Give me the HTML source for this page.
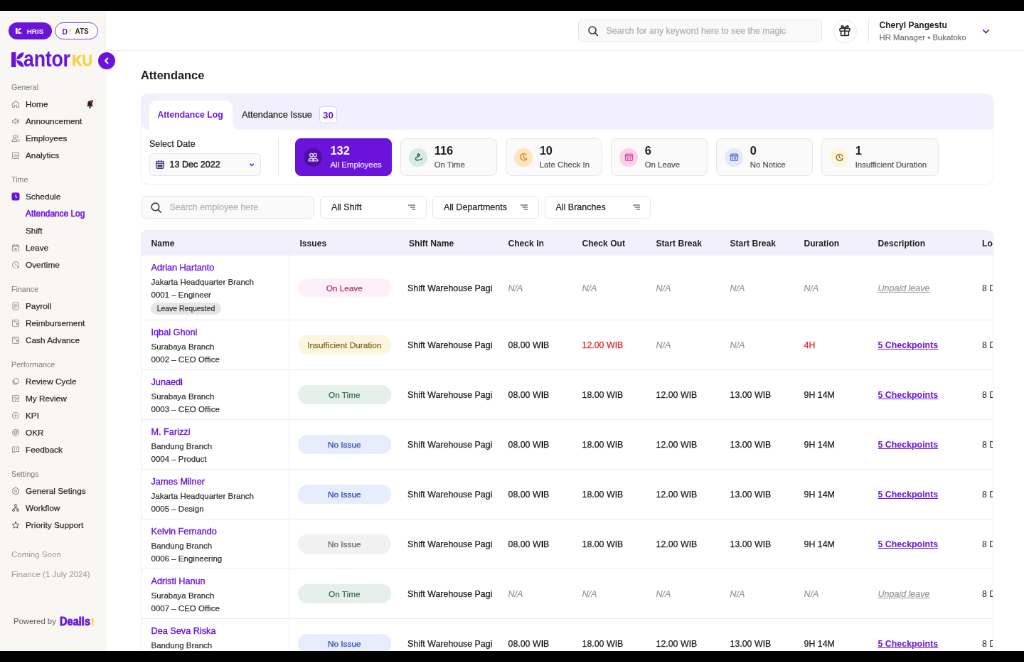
<!DOCTYPE html>
<html><head><meta charset="utf-8">
<style>
*{box-sizing:border-box;margin:0;padding:0}
html,body{width:1024px;height:662px;overflow:hidden;background:#000}
body{font-family:"Liberation Sans",sans-serif;position:relative}
#app{will-change:transform;-webkit-font-smoothing:antialiased;-webkit-text-stroke-width:0.25px;position:absolute;left:0;top:11px;width:1440px;height:900px;transform:scale(0.711111);transform-origin:0 0;background:#fff;overflow:hidden;color:#1f1f1f}
.abs{position:absolute}
[style*="font-weight:bold"],.hd,.cp,.lg{-webkit-text-stroke-width:0}
#side{position:absolute;left:0;top:0;width:150px;height:900px;background:#f8f7f4}
#hdr{position:absolute;left:150px;top:0;width:1290px;height:55.5px;background:#fff;box-shadow:0 3px 8px rgba(0,0,0,.02);border-bottom:1px solid #f0f0f0;z-index:2}
.nav{position:absolute;left:0;width:150px;height:24px;font-size:11.8px;line-height:24px;color:#2a2a2a}
.nav .t{position:absolute;left:36px;top:0}
.nav .ic{position:absolute;left:16px;top:6px;width:12px;height:12px}
.sec{position:absolute;left:16px;font-size:10.7px;line-height:24px;color:#858585;-webkit-text-stroke-width:0.1px}
.tx{white-space:nowrap;line-height:16px}
.hd{font-size:12.1px;font-weight:bold;color:#1f1f1f}
.nm{font-size:12.7px;color:#6a14d9;-webkit-text-stroke:0.35px #6a14d9}
.sb{font-size:11.5px;color:#333}
.rg{font-size:12.4px;color:#222}
.na{font-size:12.5px;font-style:italic;color:#9b9b9b}
.cp{font-size:12.4px;font-weight:bold;color:#6a14d9;text-decoration:underline}
.lg{font-size:12.4px;color:#222}
.pill{width:131.5px;height:26.4px;border-radius:13.2px;font-size:11.8px;line-height:28.4px;text-align:center}
</style></head>
<body>
<div id="app">
  <div id="side">

    <div class="abs" style="left:12px;top:16px;width:61px;height:24px;border-radius:12px;background:#6a14d9"></div>
    <div class="abs" style="left:22px;top:23.5px;width:9px;height:8px"><svg viewBox="0 0 9 8" width="9" height="8" style="display:block"><rect x="0" y="0" width="2.6" height="8" fill="#fff"/><path d="M3 3.8 Q3.8 0.3 7.6 0 Q7.3 3.5 3 3.8Z" fill="#fff"/><path d="M3 4.2 Q6.6 4.5 7 8 L3.8 8 Q3.2 6 3 4.2Z" fill="#fff"/><rect x="6.4" y="6" width="2.2" height="2" fill="#f5c21b"/></svg></div>
    <div class="abs" style="left:37.8px;top:16.5px;line-height:24px;font-size:9.8px;font-weight:bold;color:#fff">HRIS</div>
    <div class="abs" style="left:77px;top:16px;width:61px;height:24px;border-radius:12px;border:1.4px solid #7d3fe0;background:#fff"></div>
    <div class="abs" style="left:87.5px;top:16.5px;line-height:24px;font-size:10.6px;font-weight:bold;color:#6a14d9">D<span style="color:#f5c21b;margin-left:1.5px">!</span></div>
    <div class="abs" style="left:105.5px;top:16.5px;line-height:24px;font-size:10px;font-weight:bold;color:#333">ATS</div>
    <div class="abs" style="left:15.5px;top:58px;width:18px;height:21px"><svg viewBox="0 0 18 21" width="18" height="21"><rect x="0" y="0" width="6.4" height="21" fill="#6a14d9"/><path d="M7 10 Q8.5 1 17.5 0 Q17 9.5 7 10Z" fill="#6a14d9"/><path d="M7 11 Q17 11.5 17.5 21 Q8.5 20 7 11Z" fill="#6a14d9"/></svg></div>
    <div class="abs" style="left:33px;top:52.8px;font-size:30.8px;line-height:30px;font-weight:bold;color:#6a14d9;transform:scaleX(0.87);transform-origin:0 0;letter-spacing:-0.3px">antor</div>
    <div class="abs" style="left:100.5px;top:58px;font-size:22.6px;line-height:24px;font-weight:bold;color:#f7d140;-webkit-text-stroke:0.6px #f7d140;transform:scaleX(0.89);transform-origin:0 0">KU</div>

    <div class="sec" style="top:95px">General</div>
    <div class="nav" style="top:119px"><svg class="ic" viewBox="0 0 24 24" fill="none" stroke="#989898" stroke-width="2.2" stroke-linecap="round" stroke-linejoin="round"><path d="M3 10.5 12 3l9 7.5V20a1 1 0 0 1-1 1h-5v-6H9v6H4a1 1 0 0 1-1-1z"/></svg><span class="t" style="color:#2a2a2a">Home</span></div>
    <div class="nav" style="top:143px"><svg class="ic" viewBox="0 0 24 24" fill="none" stroke="#989898" stroke-width="2.2" stroke-linecap="round" stroke-linejoin="round"><path d="M3 9h4l6-4v14l-6-4H3z"/><path d="M17 8v8M21 7v10"/></svg><span class="t" style="color:#2a2a2a">Announcement</span></div>
    <div class="nav" style="top:167px"><svg class="ic" viewBox="0 0 24 24" fill="none" stroke="#989898" stroke-width="2.2" stroke-linecap="round" stroke-linejoin="round"><circle cx="9" cy="7" r="4"/><path d="M2 21v-1a6 6 0 0 1 6-6h2a6 6 0 0 1 6 6v1z"/><path d="M16 3.5a4 4 0 0 1 0 7M19 14a6 6 0 0 1 3 5v2"/></svg><span class="t" style="color:#2a2a2a">Employees</span></div>
    <div class="nav" style="top:191px"><svg class="ic" viewBox="0 0 24 24" fill="none" stroke="#989898" stroke-width="2.2" stroke-linecap="round" stroke-linejoin="round"><rect x="3" y="3" width="18" height="18" rx="3"/><path d="M8 16v-3M12 16V8M16 16v-5"/></svg><span class="t" style="color:#2a2a2a">Analytics</span></div>
    <div class="sec" style="top:225px">Time</div>
    <div class="nav" style="top:249px"><svg class="ic" viewBox="0 0 24 24"><rect x="1" y="1" width="22" height="22" rx="5" fill="#6a14d9"/><path d="M12 7v5l3 3" stroke="#fff" stroke-width="2.2" fill="none" stroke-linecap="round"/></svg><span class="t" style="color:#2a2a2a">Schedule</span></div>
    <div class="nav" style="top:273px"><span class="t" style="color:#6a14d9;font-size:11.9px;-webkit-text-stroke-width:0.55px">Attendance Log</span></div>
    <div class="nav" style="top:297px"><span class="t" style="color:#2a2a2a">Shift</span></div>
    <div class="nav" style="top:321px"><svg class="ic" viewBox="0 0 24 24" fill="none" stroke="#989898" stroke-width="2.2" stroke-linecap="round" stroke-linejoin="round"><rect x="3" y="4" width="18" height="17" rx="2"/><path d="M3 9h18M8 2v4M16 2v4M10 13l4 4M14 13l-4 4"/></svg><span class="t" style="color:#2a2a2a">Leave</span></div>
    <div class="nav" style="top:345px"><svg class="ic" viewBox="0 0 24 24" fill="none" stroke="#989898" stroke-width="2.2" stroke-linecap="round" stroke-linejoin="round"><path d="M21 12a9 9 0 1 0-9 9"/><path d="M12 7v5l3 2"/><path d="M17 17l4 4M21 17l-4 4"/></svg><span class="t" style="color:#2a2a2a">Overtime</span></div>
    <div class="sec" style="top:379px">Finance</div>
    <div class="nav" style="top:403px"><svg class="ic" viewBox="0 0 24 24" fill="none" stroke="#989898" stroke-width="2.2" stroke-linecap="round" stroke-linejoin="round"><rect x="4" y="2" width="16" height="20" rx="3"/><path d="M8 8h8M8 12h8M8 16h5"/></svg><span class="t" style="color:#2a2a2a">Payroll</span></div>
    <div class="nav" style="top:427px"><svg class="ic" viewBox="0 0 24 24" fill="none" stroke="#989898" stroke-width="2.2" stroke-linecap="round" stroke-linejoin="round"><rect x="3" y="3" width="18" height="18" rx="3"/><path d="M8 3v5h8M14 14a2 2 0 1 0 4 0 2 2 0 1 0-4 0"/></svg><span class="t" style="color:#2a2a2a">Reimbursement</span></div>
    <div class="nav" style="top:451px"><svg class="ic" viewBox="0 0 24 24" fill="none" stroke="#989898" stroke-width="2.2" stroke-linecap="round" stroke-linejoin="round"><rect x="3" y="3" width="18" height="18" rx="3"/><path d="M8 3v5h8M14 14a2 2 0 1 0 4 0 2 2 0 1 0-4 0"/></svg><span class="t" style="color:#2a2a2a">Cash Advance</span></div>
    <div class="sec" style="top:485px">Performance</div>
    <div class="nav" style="top:509px"><svg class="ic" viewBox="0 0 24 24" fill="none" stroke="#989898" stroke-width="2.2" stroke-linecap="round" stroke-linejoin="round"><circle cx="14" cy="10" r="7"/><path d="M6 8a7 7 0 1 0 10 10"/></svg><span class="t" style="color:#2a2a2a">Review Cycle</span></div>
    <div class="nav" style="top:533px"><svg class="ic" viewBox="0 0 24 24" fill="none" stroke="#989898" stroke-width="2.2" stroke-linecap="round" stroke-linejoin="round"><rect x="3" y="3" width="18" height="18" rx="3"/><path d="M7 8h7M7 12h4M11 17l7-7"/></svg><span class="t" style="color:#2a2a2a">My Review</span></div>
    <div class="nav" style="top:557px"><svg class="ic" viewBox="0 0 24 24" fill="none" stroke="#989898" stroke-width="2.2" stroke-linecap="round" stroke-linejoin="round"><circle cx="12" cy="12" r="9"/><path d="M12 8v8M8 12h8"/></svg><span class="t" style="color:#2a2a2a">KPI</span></div>
    <div class="nav" style="top:581px"><svg class="ic" viewBox="0 0 24 24" fill="none" stroke="#989898" stroke-width="2.2" stroke-linecap="round" stroke-linejoin="round"><circle cx="12" cy="12" r="9"/><circle cx="12" cy="12" r="4"/><path d="M12 12l8-8"/></svg><span class="t" style="color:#2a2a2a">OKR</span></div>
    <div class="nav" style="top:605px"><svg class="ic" viewBox="0 0 24 24" fill="none" stroke="#989898" stroke-width="2.2" stroke-linecap="round" stroke-linejoin="round"><path d="M3 4h18v13H9l-5 4v-4H3z"/><path d="M9 9v3M15 9v3"/></svg><span class="t" style="color:#2a2a2a">Feedback</span></div>
    <div class="sec" style="top:639px">Settings</div>
    <div class="nav" style="top:663px"><svg class="ic" viewBox="0 0 24 24" fill="none" stroke="#989898" stroke-width="2.2" stroke-linecap="round" stroke-linejoin="round"><path d="M12 2l8.5 5v10L12 22l-8.5-5V7z"/><circle cx="12" cy="12" r="3"/></svg><span class="t" style="color:#2a2a2a">General Setings</span></div>
    <div class="nav" style="top:687px"><svg class="ic" viewBox="0 0 24 24" fill="none" stroke="#555" stroke-width="2" stroke-linecap="round" stroke-linejoin="round"><rect x="9" y="2" width="6" height="5" rx="1.5"/><circle cx="6" cy="18" r="3"/><circle cx="18" cy="18" r="3"/><path d="M12 7v5M6 15v-1a2 2 0 0 1 2-2h8a2 2 0 0 1 2 2v1"/></svg><span class="t" style="color:#2a2a2a">Workflow</span></div>
    <div class="nav" style="top:711px"><svg class="ic" viewBox="0 0 24 24" fill="none" stroke="#555" stroke-width="2" stroke-linecap="round" stroke-linejoin="round"><path d="M12 2.5l2.9 6.2 6.6.7-5 4.5 1.4 6.6L12 17.2l-5.9 3.3 1.4-6.6-5-4.5 6.6-.7z"/></svg><span class="t" style="color:#2a2a2a">Priority Support</span></div>
    <div class="sec" style="top:752px;font-size:11.5px;color:#a0a0a0">Coming Soon</div>
    <div class="sec" style="top:780px;font-size:11.5px;color:#a0a0a0">Finance (1 July 2024)</div>
    <svg class="abs" style="left:122px;top:125px" width="9" height="12" viewBox="0 0 9 12"><path d="M4.5 1.2C2.4 1.2 1.3 2.9 1.3 4.8V7.2L0.2 9.2H8.8L7.7 7.2V4.8C7.7 2.9 6.6 1.2 4.5 1.2Z" fill="#262626"/><path d="M3.3 9.6h2.4v1.2a1.2 1.2 0 0 1-2.4 0z" fill="#262626"/><circle cx="7.2" cy="2.1" r="2.1" fill="#e3262b"/></svg>
    <div class="abs" style="left:19px;top:847px;font-size:11.34px;line-height:22px;color:#666;-webkit-text-stroke-width:0.1px">Powered by</div>
    <div class="abs" style="left:84px;top:846px;font-size:14.6px;line-height:26px;font-weight:bold;color:#6a14d9;-webkit-text-stroke:0.7px #6a14d9;transform:scaleY(1.08);transform-origin:0 60%">Dealls<span style="color:#f6d243;-webkit-text-stroke:0.5px #f6d243;font-size:13.5px;margin-left:1px">!</span></div>
  </div>
  <div id="hdr">

    <div class="abs" style="left:663px;top:12px;width:343px;height:32px;border:1px solid #e4e6ea;border-radius:6px;background:#f9f9fa"></div>
    <svg class="abs" style="left:676px;top:20px" width="16" height="16" viewBox="0 0 24 24" fill="none" stroke="#333" stroke-width="2.4" stroke-linecap="round"><circle cx="10.5" cy="10.5" r="7.5"/><path d="M16 16l5.5 5.5"/></svg>
    <div class="abs" style="left:702.5px;top:12px;line-height:32px;font-size:12.4px;color:#b0b0b0">Search for any keyword here to see the magic</div>
    <div class="abs" style="left:1022px;top:12px;width:32.5px;height:32.5px;border:1.4px solid #e3e7ed;border-radius:50%;background:#fff"></div>
    <svg class="abs" style="left:1028px;top:16.5px" width="20" height="20" viewBox="0 0 24 24" fill="none" stroke="#262626" stroke-width="1.9" stroke-linejoin="round"><rect x="3.5" y="9" width="17" height="4.5" rx="1.5"/><path d="M5.5 13.5v6.5a1 1 0 0 0 1 1h11a1 1 0 0 0 1-1v-6.5M12 9v12"/><path d="M12 9c-1.8-3.2-3.4-4.6-5-4.3C5.2 5 5.6 8.7 12 9zM12 9c1.8-3.2 3.4-4.6 5-4.3C18.8 5 18.4 8.7 12 9z"/></svg>
    <div class="abs" style="left:1071px;top:11px;width:1px;height:32px;background:#e4e6ea"></div>
    <div class="abs" style="left:1086.5px;top:12px;font-size:12.1px;line-height:16px;font-weight:bold;color:#222">Cheryl Pangestu</div>
    <div class="abs" style="left:1086.5px;top:30px;font-size:11.4px;line-height:14px;color:#777">HR Manager &bull; Bukatoko</div>
    <svg class="abs" style="left:1229.5px;top:21.5px" width="13" height="13" viewBox="0 0 24 24" fill="none" stroke="#6a14d9" stroke-width="3" stroke-linecap="round" stroke-linejoin="round"><path d="M5 9l7 7 7-7"/></svg>

  </div>
  <div class="abs" style="left:138px;top:58px;width:24px;height:24px;border-radius:50%;background:#6a14d9;box-shadow:0 0 0 3px rgba(255,255,255,.6),0 1px 4px rgba(0,0,0,.15);z-index:5"><svg width="24" height="24" viewBox="0 0 24 24" fill="none" stroke="#fff" stroke-width="2" stroke-linecap="round" stroke-linejoin="round"><path d="M13.5 8.5 10 12l3.5 3.5"/></svg></div>
  <div id="main">
    <div class="abs" style="left:198px;top:81px;font-size:16.4px;line-height:18px;font-weight:bold;color:#1c1c1c">Attendance</div>
    <div class="abs" style="left:198px;top:116px;width:1199px;height:128px;border:1px solid #eeeef2;border-radius:10px;background:#fff;overflow:hidden">
      <div class="abs" style="left:0;top:0;width:150px;height:22px;background:#f3f0fd"></div>
      <div class="abs" style="left:0;top:0;width:11px;height:49.5px;background:#f3f0fd;border-radius:0 0 0 9px"></div>
      <div class="abs" style="left:128px;top:0;width:1080px;height:49.5px;background:#f3f0fd;border-radius:0 0 0 9px"></div>
      <div class="abs" style="left:11px;top:8.5px;width:117px;height:60px;background:#fff;border-radius:10px 10px 0 0"></div>
      <div class="abs" style="left:22.5px;top:21.2px;font-size:12.2px;line-height:16px;font-weight:bold;color:#6a14d9">Attendance Log</div>
      <div class="abs" style="left:141px;top:21.2px;font-size:12.8px;line-height:16px;color:#222">Attendance Issue</div>
      <div class="abs" style="left:250px;top:16.5px;width:25px;height:24.5px;border:1px solid #d9ccf7;border-radius:5px;background:#fff;font-size:13.4px;line-height:23px;text-align:center;font-weight:bold;color:#6a14d9">30</div>
    </div>
    <div class="abs" style="left:210px;top:178.5px;font-size:12.5px;line-height:16px;color:#2a2a2a">Select Date</div>
    <div class="abs" style="left:210px;top:200px;width:156.5px;height:32px;border:1px solid #e6e6e6;border-radius:6px;background:#fafafa"></div>
    <svg class="abs" style="left:218px;top:209px" width="14" height="14" viewBox="0 0 24 24"><rect x="3" y="4" width="18" height="17" rx="2.5" fill="none" stroke="#4a3d7a" stroke-width="2.4"/><path d="M3 9h18" stroke="#4a3d7a" stroke-width="2.4"/><path d="M8 2v4M16 2v4" stroke="#4a3d7a" stroke-width="2.4"/><rect x="6" y="12" width="12" height="6" fill="#4a3d7a"/></svg>
    <div class="abs" style="left:238.5px;top:207px;font-size:12.55px;line-height:18px;color:#2a2a2a;-webkit-text-stroke-width:0.5px">13 Dec 2022</div>
    <svg class="abs" style="left:348px;top:210px" width="12" height="12" viewBox="0 0 24 24" fill="none" stroke="#6a14d9" stroke-width="3" stroke-linecap="round" stroke-linejoin="round"><path d="M7 10l5 5 5-5"/></svg>
    <div class="abs" style="left:391px;top:178.5px;width:1px;height:53.5px;background:#ececec"></div>
    <div class="abs" style="left:414.5px;top:178.5px;width:136px;height:53px;border-radius:8px;background:#6a14d9;border:1px solid #6a14d9">
      <div class="abs" style="left:11.5px;top:13px;width:26px;height:26px;border-radius:50%;background:#4f0fa3"><svg class="abs" style="left:4.5px;top:4.5px" width="17" height="17" viewBox="0 0 24 24" fill="none" stroke="#e6d9ff" stroke-width="1.9" stroke-linecap="round" stroke-linejoin="round"><circle cx="8.5" cy="8" r="3.2"/><circle cx="15.5" cy="8" r="3.2"/><path d="M3 19.5c0-2.8 2.4-5 5.5-5s4.5 2 4.5 5z"/><path d="M11 19.5c.3-2.8 2-5 4.5-5 3 0 5.5 2.2 5.5 5z"/></svg></div>
      <div class="abs" style="left:49px;top:7.8px;font-size:16.4px;line-height:18px;font-weight:bold;color:#fff">132</div>
      <div class="abs" style="left:49px;top:29.8px;font-size:11.4px;line-height:14px;color:#e9ddff">All Employees</div>
    </div>
    <div class="abs" style="left:562.5px;top:178.5px;width:136px;height:53px;border-radius:8px;background:#fafafa;border:1px solid #e6e6e6">
      <div class="abs" style="left:11.5px;top:13px;width:26px;height:26px;border-radius:50%;background:#d6ece2"><svg class="abs" style="left:5.5px;top:5.5px" width="15" height="15" viewBox="0 0 24 24" fill="none" stroke="#2c5a45" stroke-width="2.2" stroke-linecap="round" stroke-linejoin="round"><path d="M12 4.5l2.6 3-2.6 3-2.6-3z"/><path d="M12 10.5c-4 1-6.5 3-6.5 5.5 0 2 1.5 2.8 3.5 2.8H12"/><path d="M15 17l1.8 1.2L20 15"/></svg></div>
      <div class="abs" style="left:47.2px;top:7.8px;font-size:16.4px;line-height:18px;font-weight:bold;color:#1c1c1c">116</div>
      <div class="abs" style="left:47.2px;top:29.8px;font-size:11.4px;line-height:14px;color:#5a5a5a">On Time</div>
    </div>
    <div class="abs" style="left:710.5px;top:178.5px;width:136px;height:53px;border-radius:8px;background:#fafafa;border:1px solid #e6e6e6">
      <div class="abs" style="left:11.5px;top:13px;width:26px;height:26px;border-radius:50%;background:#fde4bd"><svg class="abs" style="left:5.5px;top:5.5px" width="15" height="15" viewBox="0 0 24 24" fill="none" stroke="#d2801a" stroke-width="2.2" stroke-linecap="round" stroke-linejoin="round"><path d="M18.5 14.5A7.2 7.2 0 1 1 17.5 7"/><path d="M11.5 8.5v3.5l2.5 2.5"/><rect x="16.3" y="16.3" width="3.2" height="3.2" fill="#d2801a" stroke="none"/></svg></div>
      <div class="abs" style="left:47.2px;top:7.8px;font-size:16.4px;line-height:18px;font-weight:bold;color:#1c1c1c">10</div>
      <div class="abs" style="left:47.2px;top:29.8px;font-size:11.4px;line-height:14px;color:#5a5a5a">Late Check In</div>
    </div>
    <div class="abs" style="left:858.5px;top:178.5px;width:136px;height:53px;border-radius:8px;background:#fafafa;border:1px solid #e6e6e6">
      <div class="abs" style="left:11.5px;top:13px;width:26px;height:26px;border-radius:50%;background:#fbd1ea"><svg class="abs" style="left:5.5px;top:5.5px" width="15" height="15" viewBox="0 0 24 24" fill="none" stroke="#d94ea8" stroke-width="1.9" stroke-linecap="round" stroke-linejoin="round"><rect x="4" y="5" width="16" height="15" rx="2"/><path d="M4 9h16" stroke-width="3"/><path d="M8.5 12v5M12 12v5M15.5 12v5"/></svg></div>
      <div class="abs" style="left:47.2px;top:7.8px;font-size:16.4px;line-height:18px;font-weight:bold;color:#1c1c1c">6</div>
      <div class="abs" style="left:47.2px;top:29.8px;font-size:11.4px;line-height:14px;color:#5a5a5a">On Leave</div>
    </div>
    <div class="abs" style="left:1006.5px;top:178.5px;width:136px;height:53px;border-radius:8px;background:#fafafa;border:1px solid #e6e6e6">
      <div class="abs" style="left:11.5px;top:13px;width:26px;height:26px;border-radius:50%;background:#e3e8fb"><svg class="abs" style="left:5.5px;top:5.5px" width="15" height="15" viewBox="0 0 24 24" fill="none" stroke="#5a73d6" stroke-width="1.9" stroke-linecap="round" stroke-linejoin="round"><rect x="4" y="5" width="16" height="15" rx="2"/><path d="M4 9h16" stroke-width="3"/><path d="M8.5 12v5M12 12v5M15.5 12v5"/></svg></div>
      <div class="abs" style="left:47.2px;top:7.8px;font-size:16.4px;line-height:18px;font-weight:bold;color:#1c1c1c">0</div>
      <div class="abs" style="left:47.2px;top:29.8px;font-size:11.4px;line-height:14px;color:#5a5a5a">No Notice</div>
    </div>
    <div class="abs" style="left:1154.5px;top:178.5px;width:165px;height:53px;border-radius:8px;background:#fafafa;border:1px solid #e6e6e6">
      <div class="abs" style="left:11.5px;top:13px;width:26px;height:26px;border-radius:50%;background:#fcf6da"><svg class="abs" style="left:5.5px;top:5.5px" width="15" height="15" viewBox="0 0 24 24" fill="none" stroke="#85701f" stroke-width="2.2" stroke-linecap="round" stroke-linejoin="round"><path d="M17.5 17.5A7.2 7.2 0 1 1 19 10"/><path d="M11.5 8.5v3.5l2.5 2.5"/><path d="M18.5 15v3.5"/></svg></div>
      <div class="abs" style="left:47.2px;top:7.8px;font-size:16.4px;line-height:18px;font-weight:bold;color:#1c1c1c">1</div>
      <div class="abs" style="left:47.2px;top:29.8px;font-size:11.4px;line-height:14px;color:#5a5a5a">Insufficient Duration</div>
    </div>
    <div class="abs" style="left:198px;top:260px;width:243px;height:32px;border:1px solid #e6e6e6;border-radius:6px;background:#fafafa"></div>
    <svg class="abs" style="left:211px;top:268px" width="17" height="17" viewBox="0 0 24 24" fill="none" stroke="#333" stroke-width="2.2" stroke-linecap="round"><circle cx="10.5" cy="10.5" r="7.5"/><path d="M16 16l5.5 5.5"/></svg>
    <div class="abs" style="left:238.5px;top:268px;font-size:12.4px;line-height:16px;color:#b5b5b5">Search employee here</div>
    <div class="abs" style="left:450px;top:260px;width:149.5px;height:32px;border:1px solid #e8e8e8;border-radius:6px;background:#fff"></div>
    <div class="abs" style="left:466px;top:268px;font-size:12.5px;line-height:16px;color:#2a2a2a">All Shift</div>
    <svg class="abs" style="left:573px;top:270px" width="12" height="12" viewBox="0 0 24 24" fill="none" stroke="#333" stroke-width="2.4" stroke-linecap="round"><path d="M3 6h18M8 12h13M13 18h8"/></svg>
    <div class="abs" style="left:608px;top:260px;width:149.5px;height:32px;border:1px solid #e8e8e8;border-radius:6px;background:#fff"></div>
    <div class="abs" style="left:624px;top:268px;font-size:12.5px;line-height:16px;color:#2a2a2a">All Departments</div>
    <svg class="abs" style="left:731px;top:270px" width="12" height="12" viewBox="0 0 24 24" fill="none" stroke="#333" stroke-width="2.4" stroke-linecap="round"><path d="M3 6h18M8 12h13M13 18h8"/></svg>
    <div class="abs" style="left:765.5px;top:260px;width:149.5px;height:32px;border:1px solid #e8e8e8;border-radius:6px;background:#fff"></div>
    <div class="abs" style="left:781.5px;top:268px;font-size:12.5px;line-height:16px;color:#2a2a2a">All Branches</div>
    <svg class="abs" style="left:888.5px;top:270px" width="12" height="12" viewBox="0 0 24 24" fill="none" stroke="#333" stroke-width="2.4" stroke-linecap="round"><path d="M3 6h18M8 12h13M13 18h8"/></svg>
    <div class="abs" style="left:198px;top:308px;width:1199px;height:620px;border:1px solid #ececec;border-radius:8px 8px 0 0;overflow:hidden;background:#fff">
      <div class="abs" style="left:0;top:0;width:1199px;height:35px;background:#f3f0fd"></div>
      <div class="abs" style="left:206.5px;top:0;width:1px;height:620px;background:#ececec"></div>
      <div class="abs tx hd" style="left:13.5px;top:10px">Name</div>
      <div class="abs tx hd" style="left:222.5px;top:10px">Issues</div>
      <div class="abs tx hd" style="left:376px;top:10px">Shift Name</div>
      <div class="abs tx hd" style="left:515.5px;top:10px">Check In</div>
      <div class="abs tx hd" style="left:619.5px;top:10px">Check Out</div>
      <div class="abs tx hd" style="left:723.5px;top:10px">Start Break</div>
      <div class="abs tx hd" style="left:827.5px;top:10px">Start Break</div>
      <div class="abs tx hd" style="left:931.5px;top:10px">Duration</div>
      <div class="abs tx hd" style="left:1035.5px;top:10px">Description</div>
      <div class="abs tx hd" style="left:1182px;top:10px">Log</div>
      <div class="abs" style="left:0;top:125px;width:1199px;height:1px;background:#ececec"></div>
      <div class="abs tx nm" style="left:13.5px;top:44px">Adrian Hartanto</div>
      <div class="abs tx sb" style="left:13.5px;top:64px">Jakarta Headquarter Branch</div>
      <div class="abs tx sb" style="left:13.5px;top:82px">0001 – Engineer</div>
      <div class="abs" style="left:13px;top:101px;width:99px;height:16.5px;border-radius:9px;background:#e6e6e6;font-size:10.4px;line-height:18px;text-align:center;color:#333" class="rq">Leave Requested</div>
      <div class="abs pill" style="left:219.5px;top:67.3px;background:#fdf0fa;color:#b0306e">On Leave</div>
      <div class="abs tx rg" style="left:374px;top:72.5px">Shift Warehouse Pagi</div>
      <div class="abs tx na" style="left:515.5px;top:72.5px">N/A</div>
      <div class="abs tx na" style="left:619.5px;top:72.5px">N/A</div>
      <div class="abs tx na" style="left:723.5px;top:72.5px">N/A</div>
      <div class="abs tx na" style="left:827.5px;top:72.5px">N/A</div>
      <div class="abs tx na" style="left:931.5px;top:72.5px">N/A</div>
      <div class="abs tx na" style="left:1035.5px;top:72.5px;text-decoration:underline">Unpaid leave</div>
      <div class="abs tx lg" style="left:1182px;top:72.5px">8 Dec</div>
      <div class="abs" style="left:0;top:195px;width:1199px;height:1px;background:#ececec"></div>
      <div class="abs tx nm" style="left:13.5px;top:135px">Iqbal Ghoni</div>
      <div class="abs tx sb" style="left:13.5px;top:155px">Surabaya Branch</div>
      <div class="abs tx sb" style="left:13.5px;top:173px">0002 – CEO Office</div>
      <div class="abs pill" style="left:219.5px;top:147.3px;background:#fcf6df;color:#7f6a1e">Insufficient Duration</div>
      <div class="abs tx rg" style="left:374px;top:152.5px">Shift Warehouse Pagi</div>
      <div class="abs tx rg" style="left:515.5px;top:152.5px">08.00 WIB</div>
      <div class="abs tx rg" style="left:619.5px;top:152.5px;color:#e02424">12.00 WIB</div>
      <div class="abs tx na" style="left:723.5px;top:152.5px">N/A</div>
      <div class="abs tx na" style="left:827.5px;top:152.5px">N/A</div>
      <div class="abs tx rg" style="left:931.5px;top:152.5px;color:#e02424">4H</div>
      <div class="abs tx cp" style="left:1035.5px;top:152.5px">5 Checkpoints</div>
      <div class="abs tx lg" style="left:1182px;top:152.5px">8 Dec</div>
      <div class="abs" style="left:0;top:265px;width:1199px;height:1px;background:#ececec"></div>
      <div class="abs tx nm" style="left:13.5px;top:205px">Junaedi</div>
      <div class="abs tx sb" style="left:13.5px;top:225px">Surabaya Branch</div>
      <div class="abs tx sb" style="left:13.5px;top:243px">0003 – CEO Office</div>
      <div class="abs pill" style="left:219.5px;top:217.3px;background:#e5f0ea;color:#3f6e55">On Time</div>
      <div class="abs tx rg" style="left:374px;top:222.5px">Shift Warehouse Pagi</div>
      <div class="abs tx rg" style="left:515.5px;top:222.5px">08.00 WIB</div>
      <div class="abs tx rg" style="left:619.5px;top:222.5px">18.00 WIB</div>
      <div class="abs tx rg" style="left:723.5px;top:222.5px">12.00 WIB</div>
      <div class="abs tx rg" style="left:827.5px;top:222.5px">13.00 WIB</div>
      <div class="abs tx rg" style="left:931.5px;top:222.5px">9H 14M</div>
      <div class="abs tx cp" style="left:1035.5px;top:222.5px">5 Checkpoints</div>
      <div class="abs tx lg" style="left:1182px;top:222.5px">8 Dec</div>
      <div class="abs" style="left:0;top:335px;width:1199px;height:1px;background:#ececec"></div>
      <div class="abs tx nm" style="left:13.5px;top:275px">M. Farizzi</div>
      <div class="abs tx sb" style="left:13.5px;top:295px">Bandung Branch</div>
      <div class="abs tx sb" style="left:13.5px;top:313px">0004 – Product</div>
      <div class="abs pill" style="left:219.5px;top:287.3px;background:#e6edfd;color:#3046b8">No Issue</div>
      <div class="abs tx rg" style="left:374px;top:292.5px">Shift Warehouse Pagi</div>
      <div class="abs tx rg" style="left:515.5px;top:292.5px">08.00 WIB</div>
      <div class="abs tx rg" style="left:619.5px;top:292.5px">18.00 WIB</div>
      <div class="abs tx rg" style="left:723.5px;top:292.5px">12.00 WIB</div>
      <div class="abs tx rg" style="left:827.5px;top:292.5px">13.00 WIB</div>
      <div class="abs tx rg" style="left:931.5px;top:292.5px">9H 14M</div>
      <div class="abs tx cp" style="left:1035.5px;top:292.5px">5 Checkpoints</div>
      <div class="abs tx lg" style="left:1182px;top:292.5px">8 Dec</div>
      <div class="abs" style="left:0;top:405px;width:1199px;height:1px;background:#ececec"></div>
      <div class="abs tx nm" style="left:13.5px;top:345px">James Milner</div>
      <div class="abs tx sb" style="left:13.5px;top:365px">Jakarta Headquarter Branch</div>
      <div class="abs tx sb" style="left:13.5px;top:383px">0005 – Design</div>
      <div class="abs pill" style="left:219.5px;top:357.3px;background:#e6edfd;color:#3046b8">No Issue</div>
      <div class="abs tx rg" style="left:374px;top:362.5px">Shift Warehouse Pagi</div>
      <div class="abs tx rg" style="left:515.5px;top:362.5px">08.00 WIB</div>
      <div class="abs tx rg" style="left:619.5px;top:362.5px">18.00 WIB</div>
      <div class="abs tx rg" style="left:723.5px;top:362.5px">12.00 WIB</div>
      <div class="abs tx rg" style="left:827.5px;top:362.5px">13.00 WIB</div>
      <div class="abs tx rg" style="left:931.5px;top:362.5px">9H 14M</div>
      <div class="abs tx cp" style="left:1035.5px;top:362.5px">5 Checkpoints</div>
      <div class="abs tx lg" style="left:1182px;top:362.5px">8 Dec</div>
      <div class="abs" style="left:0;top:475px;width:1199px;height:1px;background:#ececec"></div>
      <div class="abs tx nm" style="left:13.5px;top:415px">Kelvin Fernando</div>
      <div class="abs tx sb" style="left:13.5px;top:435px">Bandung Branch</div>
      <div class="abs tx sb" style="left:13.5px;top:453px">0006 – Engineering</div>
      <div class="abs pill" style="left:219.5px;top:427.3px;background:#f1f1f1;color:#666">No Issue</div>
      <div class="abs tx rg" style="left:374px;top:432.5px">Shift Warehouse Pagi</div>
      <div class="abs tx rg" style="left:515.5px;top:432.5px">08.00 WIB</div>
      <div class="abs tx rg" style="left:619.5px;top:432.5px">18.00 WIB</div>
      <div class="abs tx rg" style="left:723.5px;top:432.5px">12.00 WIB</div>
      <div class="abs tx rg" style="left:827.5px;top:432.5px">13.00 WIB</div>
      <div class="abs tx rg" style="left:931.5px;top:432.5px">9H 14M</div>
      <div class="abs tx cp" style="left:1035.5px;top:432.5px">5 Checkpoints</div>
      <div class="abs tx lg" style="left:1182px;top:432.5px">8 Dec</div>
      <div class="abs" style="left:0;top:545px;width:1199px;height:1px;background:#ececec"></div>
      <div class="abs tx nm" style="left:13.5px;top:485px">Adristi Hanun</div>
      <div class="abs tx sb" style="left:13.5px;top:505px">Surabaya Branch</div>
      <div class="abs tx sb" style="left:13.5px;top:523px">0007 – CEO Office</div>
      <div class="abs pill" style="left:219.5px;top:497.3px;background:#e5f0ea;color:#3f6e55">On Time</div>
      <div class="abs tx rg" style="left:374px;top:502.5px">Shift Warehouse Pagi</div>
      <div class="abs tx na" style="left:515.5px;top:502.5px">N/A</div>
      <div class="abs tx na" style="left:619.5px;top:502.5px">N/A</div>
      <div class="abs tx na" style="left:723.5px;top:502.5px">N/A</div>
      <div class="abs tx na" style="left:827.5px;top:502.5px">N/A</div>
      <div class="abs tx na" style="left:931.5px;top:502.5px">N/A</div>
      <div class="abs tx na" style="left:1035.5px;top:502.5px;text-decoration:underline">Unpaid leave</div>
      <div class="abs tx lg" style="left:1182px;top:502.5px">8 Dec</div>
      <div class="abs" style="left:0;top:615px;width:1199px;height:1px;background:#ececec"></div>
      <div class="abs tx nm" style="left:13.5px;top:555px">Dea Seva Riska</div>
      <div class="abs tx sb" style="left:13.5px;top:575px">Bandung Branch</div>
      <div class="abs tx sb" style="left:13.5px;top:593px">0008 – Product</div>
      <div class="abs pill" style="left:219.5px;top:567.3px;background:#e6edfd;color:#3046b8">No Issue</div>
      <div class="abs tx rg" style="left:374px;top:572.5px">Shift Warehouse Pagi</div>
      <div class="abs tx rg" style="left:515.5px;top:572.5px">08.00 WIB</div>
      <div class="abs tx rg" style="left:619.5px;top:572.5px">18.00 WIB</div>
      <div class="abs tx rg" style="left:723.5px;top:572.5px">12.00 WIB</div>
      <div class="abs tx rg" style="left:827.5px;top:572.5px">13.00 WIB</div>
      <div class="abs tx rg" style="left:931.5px;top:572.5px">9H 14M</div>
      <div class="abs tx cp" style="left:1035.5px;top:572.5px">5 Checkpoints</div>
      <div class="abs tx lg" style="left:1182px;top:572.5px">8 Dec</div>
    </div>
  </div>
</div>
</body></html>
